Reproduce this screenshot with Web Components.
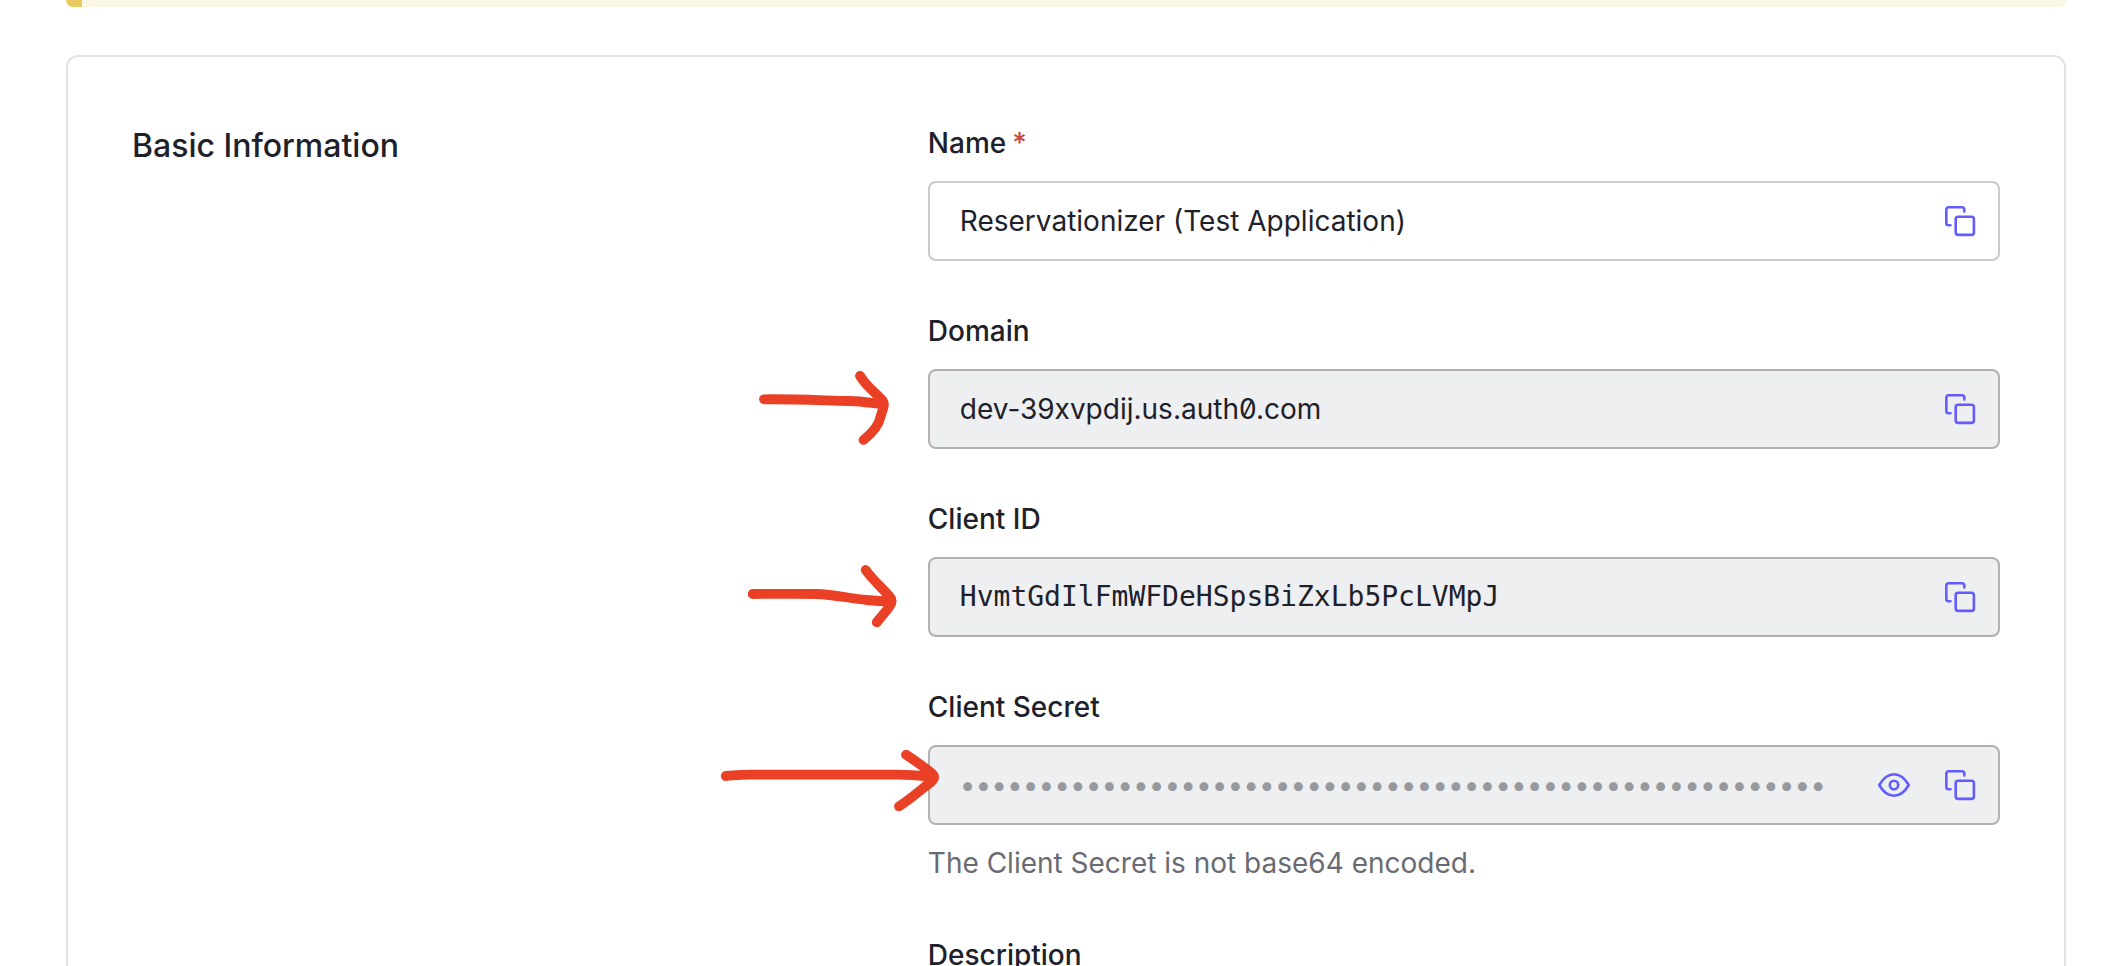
<!DOCTYPE html>
<html lang="en">
<head>
<meta charset="utf-8">
<title>Application settings</title>
<style>
  html, body { margin: 0; background: #fff; }
  body {
    font-family: Inter, "Liberation Sans", sans-serif;
    font-optical-sizing: none;
    font-size: 28px;
    line-height: 44px;
    color: #1e212a;
  }
</style>
</head>
<body>
<settings-page>
  <notice-banner slot="notice"></notice-banner>
  <settings-card heading="Basic Information">
    <text-field label="Name" value="Reservationizer (Test Application)" required></text-field>
    <text-field label="Domain" value="dev-39xvpdij.us.auth0.com" readonly>
      <hand-arrow slot="marker" shape="hooked"></hand-arrow>
    </text-field>
    <text-field label="Client ID" value="HvmtGdIlFmWFDeHSpsBiZxLb5PcLVMpJ" readonly mono>
      <hand-arrow slot="marker" shape="sloped"></hand-arrow>
    </text-field>
    <text-field label="Client Secret" value="0123456789012345678901234567890123456789012345678901234" readonly secret hint="The Client Secret is not base64 encoded.">
      <hand-arrow slot="marker" shape="long"></hand-arrow>
    </text-field>
    <text-field label="Description" value="" bare></text-field>
  </settings-card>
</settings-page>

<script>
class SettingsPage extends HTMLElement {
  constructor() {
    super();
    this.attachShadow({ mode: 'open' }).innerHTML = `
      <style>
        :host { display: block; height: 100vh; overflow: hidden; }
        main { display: flex; flex-direction: column; gap: 48px; padding: 0 46px 0 66px; }
      </style>
      <main><slot name="notice"></slot><slot></slot></main>`;
  }
}

class NoticeBanner extends HTMLElement {
  constructor() {
    super();
    this.attachShadow({ mode: 'open' }).innerHTML = `
      <style>
        :host {
          display: block; box-sizing: border-box; height: 7px;
          border-left: 16px solid #e7ca5f; background: #faf6e4;
          border-radius: 0 0 8px 8px;
        }
      </style>`;
  }
}

class SettingsCard extends HTMLElement {
  constructor() {
    super();
    this.attachShadow({ mode: 'open' }).innerHTML = `
      <style>
        :host {
          display: grid; grid-template-columns: 5fr 7fr; column-gap: 30px; align-items: start;
          padding: 64px; border: 2px solid #e3e3e4; border-radius: 12px;
        }
        h2 { margin: 0; font-size: 32px; line-height: 50px; font-weight: 500; }
        .fields { display: flex; flex-direction: column; gap: 48px; min-width: 0; }
      </style>
      <h2></h2>
      <div class="fields"><slot></slot></div>`;
    this.shadowRoot.querySelector('h2').textContent = this.getAttribute('heading');
  }
}

class IconButton extends HTMLElement {
  constructor() {
    super();
    const icons = {
      copy: '<rect x="11.7" y="11.7" width="18.2" height="18.2" rx="2.4"/><path d="M6.4 20.3H4.6a2.3 2.3 0 0 1-2.3-2.3V4.6a2.3 2.3 0 0 1 2.3-2.3H18a2.3 2.3 0 0 1 2.3 2.3v1.8"/>',
      eye: '<path d="M1.2 16C4.6 10.2 9.4 5.2 16 5.2S27.4 10.2 30.8 16C27.4 21.8 22.6 26.8 16 26.8S4.6 21.8 1.2 16Z"/><circle cx="16" cy="16" r="4.2"/>'
    };
    this.attachShadow({ mode: 'open' }).innerHTML = `
      <style>
        :host { display: block; }
        button { display: block; width: 32px; height: 32px; margin: 0; padding: 0; border: 0; background: none; color: #635dff; cursor: pointer; }
        svg { display: block; fill: none; stroke: currentColor; stroke-width: 2.6; stroke-linecap: round; stroke-linejoin: round; }
      </style>
      <button type="button"><svg viewBox="0 0 32 32" width="32" height="32" aria-hidden="true">${icons[this.getAttribute('icon')]}</svg></button>`;
    this.shadowRoot.querySelector('button').setAttribute('aria-label', this.getAttribute('label'));
  }
}

class TextField extends HTMLElement {
  constructor() {
    super();
    const has = name => this.hasAttribute(name);
    this.attachShadow({ mode: 'open' }).innerHTML = `
      <style>
        :host { display: block; }
        label { display: flex; gap: 6px; margin-bottom: 16px; font-weight: 500; }
        .star { color: #c9473b; }
        .box {
          position: relative; display: flex; align-items: center; gap: 34px;
          box-sizing: border-box; height: 80px; padding: 0 22px 0 30px;
          border: 2px solid #c9c9cf; border-radius: 8px; background: #fff;
        }
        :host([readonly]) .box { background: #eeeff1; border-color: #b1b1b3; }
        input {
          flex: 1; min-width: 0; height: 44px; margin: 0; padding: 0; border: 0; outline: 0; background: none;
          font: inherit; font-optical-sizing: none; font-feature-settings: "zero"; color: inherit;
        }
        :host([mono]) input { font-family: "DejaVu Sans Mono", monospace; }
        :host([secret]) input { color: #98999f; }
        p { margin: 16px 0 0; color: #6a6b72; }
      </style>
      <label for="control"><span class="name"></span>${has('required') ? '<span class="star">*</span>' : ''}</label>
      <div class="box">
        <input id="control" type="${has('secret') ? 'password' : 'text'}" autocomplete="off" spellcheck="false" ${has('readonly') ? 'readonly' : ''}>
        ${has('secret') ? '<icon-button icon="eye" label="Reveal"></icon-button>' : ''}
        ${has('bare') ? '' : '<icon-button icon="copy" label="Copy to clipboard"></icon-button>'}
        <slot name="marker"></slot>
      </div>
      ${has('hint') ? '<p></p>' : ''}`;
    this.shadowRoot.querySelector('.name').textContent = this.getAttribute('label');
    this.shadowRoot.querySelector('input').value = this.getAttribute('value');
    if (has('hint')) this.shadowRoot.querySelector('p').textContent = this.getAttribute('hint');
  }
}

/* Freehand arrow that lies over the page and points at the field it is slotted into. */
class HandArrow extends HTMLElement {
  constructor() {
    super();
    const shapes = {
      hooked: 'M56 30.3C92 30 118 31.6 142 32C156 32.4 166 34.5 174 35M152 6.8C159 18 168 24 174.5 31.5C178 36 174 41 172.5 48C170.5 58 163 65 155.5 71',
      sloped: 'M44.7 37C66 37 88 36.5 108.7 37C126 37.5 142 41.5 158.7 43C166 43.7 174 44.3 182 44.5M157.7 13C164 22 174 31 182 40C185 43.5 184 46 181.5 49.5C178 54.5 173 60 168.7 65.3',
      long: 'M17.7 31C26 30.5 32 29.7 41 29.7H190C204 29.7 214 31 224 32M198 9.7C206 15 216 22 223.5 28C227 31 227 33.5 223.5 36.5C213 44.5 202 54.5 191 61.3'
    };
    this.attachShadow({ mode: 'open' }).innerHTML = `
      <style>
        :host { position: absolute; top: -2px; left: -222px; pointer-events: none; }
        svg { display: block; overflow: visible; fill: none; stroke: #ea4025; stroke-width: 9.8; stroke-linecap: round; stroke-linejoin: round; }
      </style>
      <svg viewBox="0 0 240 80" width="240" height="80" aria-hidden="true"><path d="${shapes[this.getAttribute('shape')]}"/></svg>`;
  }
}

customElements.define('icon-button', IconButton);
customElements.define('hand-arrow', HandArrow);
customElements.define('text-field', TextField);
customElements.define('settings-card', SettingsCard);
customElements.define('notice-banner', NoticeBanner);
customElements.define('settings-page', SettingsPage);
</script>
</body>
</html>
